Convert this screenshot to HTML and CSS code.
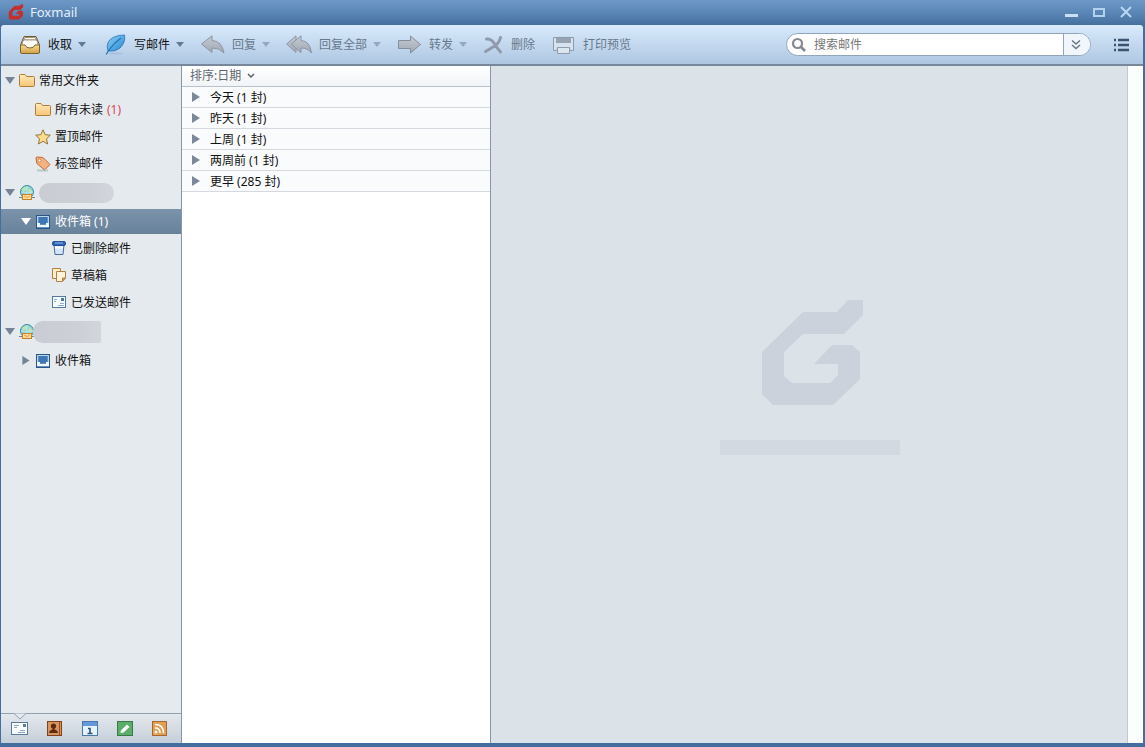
FILE: index.html
```html
<!DOCTYPE html>
<html lang="zh-CN">
<head>
  <meta charset="UTF-8">
  <title>Foxmail</title>
  <link rel="stylesheet" href="styles.css">
</head>
<body>
  <svg class="defs" width="0" height="0" aria-hidden="true">
    <defs>
      <linearGradient id="gold" x1="0" y1="0" x2="0" y2="1"><stop offset="0" stop-color="#f6dc94"/><stop offset="1" stop-color="#d0a047"/></linearGradient>
      <linearGradient id="folderFill" x1="0" y1="0" x2="0" y2="1"><stop offset="0" stop-color="#ffebbc"/><stop offset="1" stop-color="#f5c576"/></linearGradient>
      <linearGradient id="blue" x1="0" y1="0" x2="1" y2="1"><stop offset="0" stop-color="#8fd2f7"/><stop offset="1" stop-color="#2786cd"/></linearGradient>
      <linearGradient id="gray" x1="0" y1="0" x2="0" y2="1"><stop offset="0" stop-color="#c5ccd5"/><stop offset="1" stop-color="#a0a7b2"/></linearGradient>
    </defs>
    <symbol id="fox" viewBox="0 0 102 105">
      <path d="M86 0H101V15L82 34H41L22 52V76L30 83H68L76 75V64H52L70 45H90L98 52V79L71 105H11L0 94V52L41 12H75Z"/>
    </symbol>
    <symbol id="down" viewBox="0 0 8 5"><path d="M0 0H8L4 5Z" fill="currentColor"/></symbol>
    <symbol id="open" viewBox="0 0 10 7"><path d="M0 0H10L5 7Z" fill="currentColor"/></symbol>
    <symbol id="closed" viewBox="0 0 8 10"><path d="M0 0L8 5L0 10Z" fill="currentColor"/></symbol>
    <symbol id="folder" viewBox="0 0 16 16">
      <path d="M.5 12.5V2.5Q.5 1.500 1.500 1.500H6L7.500 3.500H14.500Q15.500 3.500 15.500 4.500V12.500Q15.500 13.500 14.500 13.500H1.500Q.5 13.500 .5 12.500Z" fill="url(#folderFill)" stroke="#b07c38"/>
    </symbol>
    <symbol id="globe" viewBox="0 0 16 16">
      <circle cx="8" cy="7" r="6.500" fill="#8fd3d6" stroke="#3b8ba0"/>
      <path d="M3 4Q6 1 9 2L8 5L4 7ZM10 3L13 6L12 9L9 7Z" fill="#b9e5b4"/>
      <path d="M2 7Q8 9 14 7M8 1V9" stroke="#c9eef0" fill="none" stroke-width=".7"/>
      <path d="M0 12.500H16" stroke="#6c8097"/>
      <rect x="3.500" y="9.500" width="9" height="5" fill="#ffd98c" stroke="#c9822b"/>
      <path d="M5 11L8 12.500L11 11" fill="none" stroke="#d99745" stroke-width=".8"/>
    </symbol>
    <symbol id="inbox" viewBox="0 0 14 14">
      <rect x=".5" y=".5" width="13" height="13" fill="#5d93c6" stroke="#2b5584"/>
      <rect x="3" y="2" width="8" height="7" fill="#3f78b0"/>
      <path d="M1 8H4V10H10V8H13V12H1Z" fill="#eef5fb"/>
      <path d="M1.500 8V1.500H12.500V8" fill="none" stroke="#bdd5eb"/>
    </symbol>
  </svg>

  <header class="titlebar">
    <svg class="title-logo" viewBox="-4 -4 110 113"><use href="#fox" width="102" height="105"/></svg>
    <h1>Foxmail</h1>
    <div class="window-buttons">
      <button aria-label="最小化"><svg width="14" height="14"><rect x="0" y="9" width="13" height="3" fill="#c8dff6"/></svg></button>
      <button aria-label="最大化"><svg width="14" height="14"><rect x="2" y="4" width="10" height="7" fill="none" stroke="#b3d2f0" stroke-width="2"/></svg></button>
      <button aria-label="关闭"><svg width="14" height="14"><path d="M2 2L12 12M12 2L2 12" stroke="#b9d6f2" stroke-width="2"/></svg></button>
    </div>
  </header>

  <div class="toolbar">
    <div class="tools">
      <button class="tool">
        <svg width="22" height="20" viewBox="0 0 22 20">
          <path d="M5 1.500H17L20.500 10V17.500H1.500V10Z" fill="#f3e3b8" stroke="#6f5a35"/>
          <path d="M6 2.500H16L17.500 5H4.500Z" fill="#fff" stroke="#80704f" stroke-width=".7"/>
          <path d="M4.500 5H17.500L19 8.500H3Z" fill="#fff" stroke="#80704f" stroke-width=".7"/>
          <path d="M4 8H18V10L15 13H7L4 10Z" fill="#fffdf5"/>
          <path d="M1.500 10H6Q7 13 11 13T16 10H20.500V17Q20.500 18.500 19 18.500H3Q1.500 18.500 1.500 17Z" fill="url(#gold)" stroke="#7d6228"/>
        </svg>
        <span>收取</span><svg class="drop"><use href="#down"/></svg>
      </button>
      <button class="tool">
        <svg width="25" height="22" viewBox="0 0 25 22">
          <ellipse cx="13" cy="19.500" rx="8" ry="1.200" fill="#9eb8d3" opacity=".6"/>
          <path d="M6 17Q3 8 11 3.500Q16 .8 22.500 1Q24 8 18 14Q13 18 6 17Z" fill="url(#blue)" stroke="#2374b7" stroke-width=".8"/>
          <path d="M4 20.500L7 16Q12 9 19 4" fill="none" stroke="#1f73b4" stroke-width="1.200"/>
        </svg>
        <span>写邮件</span><svg class="drop"><use href="#down"/></svg>
      </button>
      <button class="tool" disabled>
        <svg width="25" height="20" viewBox="0 0 25 20"><path d="M1.500 9L12 .8V5.500Q22 6 24 18Q19 12.500 12 13V17.500Z" fill="url(#gray)" stroke="#8c95a3"/></svg>
        <span>回复</span><svg class="drop"><use href="#down"/></svg>
      </button>
      <button class="tool" disabled>
        <svg width="26" height="20" viewBox="0 0 26 20"><path d="M.7 9L10 .8V5L15 .8V5.500Q24 6 25.500 18Q22 13 15 13V17.500L10 13.500V17.500Z" fill="url(#gray)" stroke="#8c95a3"/><path d="M10 5L5.500 9L10 13.500" fill="none" stroke="#8c95a3"/></svg>
        <span>回复全部</span><svg class="drop"><use href="#down"/></svg>
      </button>
      <button class="tool" disabled>
        <svg width="25" height="20" viewBox="0 0 25 20"><path d="M1.500 5.500H13.500V1L23.500 9.500L13.500 18V13.500H1.500Z" fill="url(#gray)" stroke="#858e9c"/></svg>
        <span>转发</span><svg class="drop"><use href="#down"/></svg>
      </button>
      <button class="tool" disabled>
        <svg width="21" height="20" viewBox="0 0 21 20"><path d="M3.500 4Q8 3.500 11 8Q14 13 17.500 17M17.500 2.500Q16 9 10 12Q6 14.500 2.500 16.500" fill="none" stroke="#8f9bab" stroke-width="3" stroke-linecap="round"/></svg>
        <span>删除</span>
      </button>
      <button class="tool" disabled>
        <svg width="25" height="20" viewBox="0 0 25 20"><path d="M2.500 2.500H22.500V15.500H2.500Z" fill="#d5e2f0" stroke="#8e9bab"/><path d="M5 3H20V8H5Z" fill="#98a3b1"/><path d="M5.500 12.500H19.500V15.500H5.500Z" fill="#b9c6d5"/><path d="M6.500 12.500H18.500V18.500H6.500Z" fill="#dce6f1" stroke="#8e9bab"/></svg>
        <span>打印预览</span>
      </button>
    </div>
    <form class="search">
      <label for="searchMail" aria-label="搜索邮件"><svg width="16" height="16"><circle cx="6.500" cy="6.500" r="4.500" fill="none" stroke="#85888d" stroke-width="2.200"/><path d="M10 10L14 14" stroke="#85888d" stroke-width="2.600"/></svg></label>
      <input id="searchMail" type="text" placeholder="搜索邮件">
      <button type="button" aria-label="搜索选项"><svg width="10" height="10"><path d="M1 .5L5 4L9 .5M1 5L5 8.500L9 5" fill="none" stroke="#687482" stroke-width="1.400"/></svg></button>
    </form>
    <button class="menu" aria-label="菜单"><svg width="16" height="14"><path d="M0 2H2M4 2H15M0 7H2M4 7H15M0 12H2M4 12H15" stroke="#3b5472" stroke-width="2.600"/></svg></button>
  </div>

  <main class="panes">
    <aside class="sidebar">
      <nav class="tree">
        <a href="#" class="root"><svg class="fold"><use href="#open"/></svg><svg class="icon"><use href="#folder"/></svg>常用文件夹</a>
        <a href="#" class="child"><svg class="icon"><use href="#folder"/></svg>所有未读 <span class="unread">(1)</span></a>
        <a href="#" class="child"><svg class="icon" viewBox="0 0 16 16"><path d="M8 .8L10.200 5.700L15.300 6.200L11.500 9.800L12.600 15L8 12.300L3.400 15L4.500 9.800L.7 6.200L5.800 5.700Z" fill="#fbdc8c" stroke="#8f7440"/></svg>置顶邮件</a>
        <a href="#" class="child"><svg class="icon" viewBox="0 0 16 16"><path d="M2 14.500H13" stroke="#b9c9c8" stroke-width="2"/><path d="M1 2Q1 1 2 1L8 1.500L14.500 8Q15 8.500 14.500 9L10 13.500Q9.500 14 9 13.500L1.800 7.500Z" fill="#f6b27c" stroke="#c06a35"/><circle cx="4.500" cy="4.500" r="1.500" fill="#fff" stroke="#ba6535" stroke-width=".7"/></svg>标签邮件</a>
        <a href="#" class="account" aria-label="邮箱账户一"><svg class="fold"><use href="#open"/></svg><svg class="icon"><use href="#globe"/></svg><span class="smudge"></span></a>
        <a href="#" class="box selected"><svg class="fold"><use href="#open"/></svg><svg class="inbox"><use href="#inbox"/></svg>收件箱 (1)</a>
        <a href="#" class="sub"><svg class="icon" viewBox="0 0 16 16"><path d="M3 5H13L12 14.500H4Z" fill="#d5e4f8" stroke="#456ba9"/><path d="M4 7.500H12" stroke="#fff" stroke-width="2"/><rect x="1.500" y="1.500" width="13" height="4" rx="1.500" fill="#2d62b7" stroke="#27509a"/><path d="M4 3H12" stroke="#94b9ee"/></svg>已删除邮件</a>
        <a href="#" class="sub"><svg class="icon" viewBox="0 0 16 16"><path d="M1.500 1.500H9.500V11.500H1.500Z" fill="#fff0cb" stroke="#b28142"/><path d="M5.500 4.500H14.500V11L11.500 14.500H5.500Z" fill="#fff4d9" stroke="#b28142"/><path d="M14 11H11.500V14Z" fill="#e2b371" stroke="#b28142"/></svg>草稿箱</a>
        <a href="#" class="sub"><svg class="icon" viewBox="0 0 16 16"><rect x="1.500" y="2.500" width="13" height="11" fill="#f5faff" stroke="#56779e"/><path d="M3 5.500H6M3 7.500H5M7 11.500H13M9 9.500H13" stroke="#8eabc9"/><path d="M10 4H13V7H10Z" fill="#4f78aa"/></svg>已发送邮件</a>
        <a href="#" class="account" aria-label="邮箱账户二"><svg class="fold"><use href="#open"/></svg><svg class="icon"><use href="#globe"/></svg><span class="smudge wide"></span></a>
        <a href="#" class="box"><svg class="fold"><use href="#closed"/></svg><svg class="inbox"><use href="#inbox"/></svg>收件箱</a>
      </nav>
      <footer class="modules">
        <svg class="notch" width="12" height="7"><path d="M0 .5L6 6L12 .5" fill="#e5eaef" stroke="#929fae"/></svg>
        <button aria-label="邮件"><svg width="18" height="16"><rect x=".5" y="1.500" width="16" height="12" fill="#fafdff" stroke="#5d7998"/><path d="M3 4.500H8M3 6.500H6M9 9.500H14M7 11.500H14" stroke="#8ca6c0"/><path d="M12 3H15V6H12Z" fill="#5a7da5"/></svg></button>
        <button aria-label="联系人"><svg width="18" height="16"><rect x="1.500" y=".5" width="14" height="14" fill="#d9955a" stroke="#7e431d"/><path d="M13.500 1V14" stroke="#8b4e26"/><circle cx="7.500" cy="5" r="2.600" fill="#5c2b12"/><path d="M3 12Q3 9.500 6.500 8.500V7H8.500V8.500Q12 9.500 12 12Z" fill="#5c2b12"/></svg></button>
        <button aria-label="日历"><svg width="18" height="16"><rect x="1.500" y=".5" width="15" height="14" fill="#e5f3ff" stroke="#4a78ad"/><path d="M2 3H16" stroke="#6798dc" stroke-width="4"/><path d="M7 7.500H9V12M6.500 12.500H11.500" fill="none" stroke="#315479" stroke-width="1.600"/></svg></button>
        <button aria-label="便签"><svg width="18" height="16"><rect x="1.500" y=".5" width="15" height="14" fill="#5cad69" stroke="#39794a"/><path d="M5 9.500L11 3.500L13.500 6L7.500 11.500L4.500 12Z" fill="#fff"/></svg></button>
        <button aria-label="订阅"><svg width="18" height="16"><rect x="1.500" y=".5" width="14" height="14" fill="#e2a052" stroke="#a7682e"/><circle cx="5" cy="11" r="1.500" fill="#fff"/><path d="M4 7Q9 7 9 12M4 3.500Q12.500 3.500 12.500 12" fill="none" stroke="#fff" stroke-width="1.600"/></svg></button>
      </footer>
    </aside>

    <section class="mail-list">
      <button class="sort">排序:日期 <svg width="8" height="6"><path d="M1 1L4 4L7 1" fill="none" stroke="#566068" stroke-width="1.500"/></svg></button>
      <button class="group"><svg><use href="#closed"/></svg>今天 (1 封)</button>
      <button class="group"><svg><use href="#closed"/></svg>昨天 (1 封)</button>
      <button class="group"><svg><use href="#closed"/></svg>上周 (1 封)</button>
      <button class="group"><svg><use href="#closed"/></svg>两周前 (1 封)</button>
      <button class="group"><svg><use href="#closed"/></svg>更早 (285 封)</button>
    </section>

    <section class="preview">
      <svg class="watermark" viewBox="0 0 102 105"><use href="#fox"/></svg>
      <div class="caption"></div>
    </section>
    <div class="gutter"></div>
  </main>
</body>
</html>
```
FILE: styles.css
```css
* {
  box-sizing: border-box;
}
body {
  margin: 0;
  height: 100vh;
  display: flex;
  flex-direction: column;
  font-family: "Noto Sans", "Noto Sans CJK SC", sans-serif;
  font-size: 12px;
  line-height: 20px;
  color: #111;
  background-color: #436e9f;
  overflow: hidden;
}
button {
  display: flex;
  align-items: center;
  padding: 0;
  border: 0;
  background: none;
  font: inherit;
  color: inherit;
  white-space: nowrap;
}
svg {
  flex: none;
  display: block;
}
.defs {
  position: absolute;
}

/* title bar */
.titlebar {
  flex: none;
  height: 25px;
  padding: 0 12px 2px 8px;
  display: flex;
  align-items: center;
  gap: 6px;
  background: linear-gradient(#6d98c6, #5b87b7 50%, #446f9f);
}
.title-logo {
  width: 16px;
  height: 16px;
  fill: #c52f2c;
  stroke: #c52f2c;
  stroke-width: 6px;
}
h1 {
  margin: 0;
  font-size: 13px;
  font-weight: normal;
  color: #e4effa;
}
.window-buttons {
  margin-left: auto;
  display: flex;
  gap: 13px;
}

/* toolbar */
.toolbar {
  flex: none;
  height: 41px;
  margin: 0 2px 0 1px;
  padding: 0 13px 0 18px;
  display: flex;
  align-items: center;
  background: linear-gradient(#d9ebfb, #c5daf0 45%, #aec7e2);
  border-bottom: 2px solid #77889d;
  border-radius: 3px 3px 0 0;
}
.tools {
  display: flex;
  gap: 16px;
}
.tool {
  gap: 7px;
}
.tool:disabled {
  color: #68788b;
}
.drop {
  width: 8px;
  height: 5px;
  margin-left: -1px;
  color: #617b97;
}
.tool:disabled .drop {
  color: #94a9c1;
}
.search {
  width: 305px;
  height: 23px;
  margin-left: auto;
  display: flex;
  align-items: center;
  background-color: #fff;
  border: 1px solid #92a5ba;
  border-radius: 12px;
  overflow: hidden;
}
.search label {
  padding: 0 7px 0 4px;
}
.search input {
  flex: 1;
  min-width: 0;
  height: 21px;
  padding: 0;
  border: 0;
  outline: 0;
  background: none;
  font: inherit;
}
.search input::placeholder {
  color: #777;
}
.search button {
  width: 27px;
  height: 21px;
  padding-left: 7px;
  border-left: 1px solid #92a5ba;
  background-color: #f0f6fc;
}
.menu {
  margin-left: 23px;
}

/* panes */
.panes {
  flex: 1;
  min-height: 0;
  margin: 0 2px 4px 1px;
  display: flex;
}
.sidebar {
  width: 181px;
  flex: none;
  display: flex;
  flex-direction: column;
  background-color: #e5eaef;
  border-right: 1px solid #8796a9;
}
.tree {
  flex: 1;
}
.tree a {
  height: 27px;
  display: flex;
  align-items: center;
  gap: 4px;
  color: #111;
  text-decoration: none;
  white-space: nowrap;
}
.tree .root {
  height: 29px;
  padding-left: 4px;
}
.tree .child {
  padding: 2px 0 0 34px;
}
.tree .account {
  height: 33px;
  padding-left: 4px;
}
.tree .box {
  height: 25px;
  padding-left: 20px;
}
.tree .sub {
  padding: 2px 0 0 50px;
}
.tree .selected {
  color: #fff;
  background: linear-gradient(#7b93ab, #68829b);
}
.fold {
  width: 10px;
  height: 9px;
  color: #748395;
}
.selected .fold {
  color: #fff;
}
.icon {
  width: 16px;
  height: 16px;
}
.sub .icon {
  margin-bottom: 2px;
}
.inbox {
  width: 14px;
  height: 14px;
  margin: 0 1px;
}
.unread {
  color: #e0444f;
}
.smudge {
  width: 75px;
  height: 20px;
  border-radius: 10px;
  background: linear-gradient(90deg, #c9cdd3, #cdd1d7 70%, #d2d6dc);
}
.smudge.wide {
  width: 68px;
  height: 22px;
  margin-left: -6px;
  border-radius: 10px 2px 2px 10px;
}
.modules {
  height: 30px;
  padding-left: 10px;
  display: flex;
  align-items: center;
  gap: 17px;
  position: relative;
  background: linear-gradient(#e3e8ed, #c5cfd9);
  border-top: 1px solid #929fae;
}
.notch {
  position: absolute;
  top: -1px;
  left: 13px;
}

.mail-list {
  width: 309px;
  flex: none;
  background-color: #fff;
  border-right: 1px solid #8796a9;
}
.mail-list button {
  width: 100%;
  height: 21px;
  border-bottom: 1px solid #d3d9df;
}
.mail-list .sort {
  gap: 6px;
  padding-left: 8px;
  color: #5e686e;
  background: linear-gradient(#fff, #f1f4f7);
  border-bottom-color: #b8c3cd;
}
.mail-list .group {
  gap: 10px;
  padding: 2px 0 0 10px;
  background-color: #fafbfd;
}
.group svg {
  width: 8px;
  height: 10px;
  margin-bottom: 2px;
  color: #7a8897;
}

.preview {
  flex: 1;
  display: flex;
  flex-direction: column;
  align-items: center;
  justify-content: center;
  gap: 35px;
  padding: 0 0 54px 2px;
  background-color: #dbe2e8;
}
.watermark {
  width: 102px;
  height: 105px;
  margin-left: 6px;
  fill: #cbd2dc;
}
.caption {
  width: 180px;
  height: 15px;
  background-color: #d2d9e0;
}
.gutter {
  width: 16px;
  flex: none;
  background-color: #fcfefe;
  border-left: 1px solid #c1c9d1;
}
```
